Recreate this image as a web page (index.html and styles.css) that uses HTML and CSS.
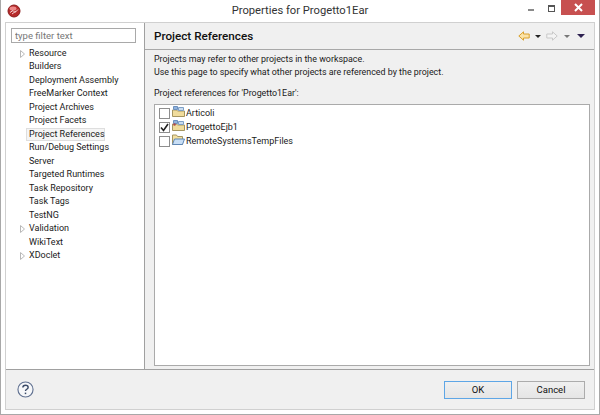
FILE: index.html
```html
<!DOCTYPE html>
<html lang="en">
<head>
    <meta charset="UTF-8">
    <title>Properties for Progetto1Ear</title>
    <link rel="stylesheet" href="styles.css">
</head>
<body>
    <div class="window">
        <div class="titlebar">
            <div class="title-left">
                <svg width="14" height="14" viewBox="0 0 14 14">
                    <circle cx="7" cy="7" r="6" fill="#b52a2a" stroke="#8c1c1c"/>
                    <ellipse cx="6" cy="4.500" rx="3.500" ry="2" fill="#e88"/>
                    <path d="M3 8.500l3-2 2 2 3-3M5 10l4-3" fill="none" stroke="#f6d0d0" stroke-width="1"/>
                </svg>
            </div>
            <div class="title-text">Properties for Progetto1Ear</div>
            <div class="win-controls">
                <span class="win-min"></span>
                <span class="win-max"></span>
                <span class="win-close">
                    <svg width="9" height="9" viewBox="0 0 9 9">
                        <path d="M1 1l7 7M8 1l-7 7" stroke="#fff" stroke-width="2"/>
                    </svg>
                </span>
            </div>
        </div>
        <div class="frame">
            <div class="content">
                <div class="sidebar">
                    <input class="filter" type="text" placeholder="type filter text">
                    <ul class="tree">
                        <li><svg class="arrow" width="5" height="8" viewBox="0 0 5 8"><path d="M.5.5l4 3.500-4 3.500z" fill="#fff" stroke="#b8b8b8"/></svg>Resource</li>
                        <li>Builders</li>
                        <li>Deployment Assembly</li>
                        <li>FreeMarker Context</li>
                        <li>Project Archives</li>
                        <li>Project Facets</li>
                        <li class="selected">Project References</li>
                        <li>Run/Debug Settings</li>
                        <li>Server</li>
                        <li>Targeted Runtimes</li>
                        <li>Task Repository</li>
                        <li>Task Tags</li>
                        <li>TestNG</li>
                        <li><svg class="arrow" width="5" height="8" viewBox="0 0 5 8"><path d="M.5.5l4 3.500-4 3.500z" fill="#fff" stroke="#b8b8b8"/></svg>Validation</li>
                        <li>WikiText</li>
                        <li><svg class="arrow" width="5" height="8" viewBox="0 0 5 8"><path d="M.5.5l4 3.500-4 3.500z" fill="#fff" stroke="#b8b8b8"/></svg>XDoclet</li>
                    </ul>
                </div>
                <div class="main">
                    <div class="page-header">
                        <h2>Project References</h2>
                        <div class="nav-icons">
                            <svg width="12" height="10" viewBox="0 0 12 10"><path d="M.8 5L5.500.8V3h5.700v4H5.500v2.200z" fill="#fbe3a8" stroke="#d9a02e"/></svg>
                            <span class="caret dark"></span>
                            <svg width="12" height="10" viewBox="0 0 12 10"><path d="M11.200 5L6.500.8V3H.8v4h5.700v2.200z" fill="#f4f4f4" stroke="#c8c8c8"/></svg>
                            <span class="caret grey"></span>
                            <span class="caret menu"></span>
                        </div>
                    </div>
                    <div class="page-body">
                        <p class="desc">Projects may refer to other projects in the workspace.<br>Use this page to specify what other projects are referenced by the project.</p>
                        <p class="list-label">Project references for 'Progetto1Ear':</p>
                        <div class="list">
                            <div class="row">
                                <span class="check"></span>
                                <svg class="proj-icon" width="13" height="11" viewBox="0 0 13 11"><path d="M.5 4h4l1 1h7v5.500H.5z" fill="#f0dc9c" stroke="#a59560"/><path d="M1.500.5h4v3h-4z" fill="#8fb2de" stroke="#6d90bc"/><path d="M6.500 1.500h5v3h-5z" fill="#c9dcf0" stroke="#7d9fc6"/></svg>
                                <span>Articoli</span>
                            </div>
                            <div class="row">
                                <span class="check"><svg width="9" height="9" viewBox="0 0 9 9"><path d="M1 4.500l2.500 3L8 1" fill="none" stroke="#222" stroke-width="1.600"/></svg></span>
                                <svg class="proj-icon" width="13" height="11" viewBox="0 0 13 11"><path d="M.5 4h4l1 1h7v5.500H.5z" fill="#f0dc9c" stroke="#a59560"/><path d="M1.500.5h4v3h-4z" fill="#8fb2de" stroke="#6d90bc"/><path d="M6.500 1.500h5v3h-5z" fill="#c9dcf0" stroke="#7d9fc6"/><circle cx="2.500" cy="4.500" r="1.300" fill="#b04a4a"/></svg>
                                <span>ProgettoEjb1</span>
                            </div>
                            <div class="row">
                                <span class="check"></span>
                                <svg class="proj-icon" width="13" height="11" viewBox="0 0 13 11"><path d="M.5 1h4l1 1.500h5v8H.5z" fill="#f2dfa0" stroke="#a59560"/><path d="M2.500 5h10l-2 5.500h-10z" fill="#c8def5" stroke="#5f86b4"/></svg>
                                <span>RemoteSystemsTempFiles</span>
                            </div>
                        </div>
                    </div>
                </div>
            </div>
            <div class="footer">
                <svg class="help" width="17" height="17" viewBox="0 0 18 18">
                    <circle cx="9" cy="9" r="8" fill="#f6f7f9" stroke="#5f7090" stroke-width="1.200"/>
                    <path d="M6.200 7c0-1.600 1.100-2.500 2.800-2.500s2.800.9 2.800 2.300c0 2-2.800 1.900-2.800 3.800" fill="none" stroke="#3a4a68" stroke-width="1.500"/>
                    <rect x="8.200" y="12.300" width="1.600" height="1.600" fill="#3a4a68"/>
                </svg>
                <div class="buttons">
                    <button class="btn btn-default">OK</button>
                    <button class="btn">Cancel</button>
                </div>
            </div>
        </div>
    </div>
</body>
</html>
```

FILE: styles.css
```css
html, body {
    margin: 0;
    height: 100%;
}
body {
    font-family: Roboto, "Liberation Sans", sans-serif;
    font-size: 9px;
    color: #1a1a1a;
}
.window {
    box-sizing: border-box;
    width: 600px;
    height: 415px;
    background-color: #fff;
    border: 1px solid #a8a8a8;
    border-top: none;
    display: flex;
    flex-direction: column;
}
.titlebar {
    height: 22px;
    display: grid;
    grid-template-columns: 1fr auto 1fr;
    flex-shrink: 0;
}
.title-left {
    padding: 4px 0 0 6px;
}
.title-text {
    font-size: 11.200px;
    color: #333;
    padding-top: 4px;
}
.win-controls {
    display: flex;
    justify-content: flex-end;
    align-items: flex-start;
    padding-right: 4px;
}
.win-min {
    width: 6px;
    height: 2px;
    background-color: #8a8a8a;
    margin: 9px 14px 0 0;
}
.win-max {
    box-sizing: border-box;
    width: 7px;
    height: 7px;
    border: 1px solid #555;
    border-top-width: 2px;
    margin: 5px 6px 0 0;
}
.win-close {
    width: 34px;
    height: 15px;
    background-color: #c75050;
    display: flex;
    align-items: center;
    justify-content: center;
}
.frame {
    flex: 1;
    margin: 0 4px 4px 4px;
    border: 1px solid #d0d0d0;
    display: flex;
    flex-direction: column;
    min-height: 0;
}
.content {
    flex: 1;
    display: flex;
    min-height: 0;
    border-bottom: 1px solid #a0a0a0;
}
.sidebar {
    width: 138px;
    flex-shrink: 0;
    background-color: #fff;
    border-right: 1px solid #a0a0a0;
    padding-top: 5px;
}
.filter {
    display: block;
    box-sizing: border-box;
    width: 125px;
    height: 15px;
    margin-left: 5px;
    padding: 0 3px;
    border: 1px solid #a9a9a9;
    font-family: inherit;
    font-size: 9.500px;
    outline: none;
}
.filter::placeholder {
    color: #777;
}
.tree {
    list-style: none;
    margin: 4px 0 0;
    padding: 0;
}
.tree li {
    position: relative;
    height: 13.470px;
    line-height: 13px;
    padding-left: 23px;
    white-space: nowrap;
}
.tree .arrow {
    position: absolute;
    left: 14px;
    top: 3px;
}
.tree .selected {
    background-color: #f5f5f5;
    box-shadow: inset 0 0 0 1px #dedede;
    margin-left: 20px;
    padding-left: 3px;
    width: 76px;
}
.main {
    flex: 1;
    background-color: #f0f0f0;
    display: flex;
    flex-direction: column;
    min-width: 0;
}
.page-header {
    height: 26px;
    border-bottom: 1px solid #a8a8a8;
    display: flex;
    align-items: center;
    justify-content: space-between;
    padding: 0 9px 0 9px;
    flex-shrink: 0;
}
h2 {
    margin: 0;
    font-size: 11.700px;
    font-weight: 500;
    color: #111;
}
.nav-icons {
    display: flex;
    align-items: center;
    gap: 5px;
}
.caret {
    width: 0;
    height: 0;
    border-left: 3px solid transparent;
    border-right: 3px solid transparent;
    border-top: 3px solid #222;
}
.caret.grey {
    border-top-color: #777;
    margin-left: 1px;
}
.caret.menu {
    border-left-width: 4px;
    border-right-width: 4px;
    border-top: 4px solid #2d2050;
    margin-left: 2px;
}
.page-body {
    flex: 1;
    display: flex;
    flex-direction: column;
    padding: 3px 4px 3px 9px;
    min-height: 0;
}
.desc {
    margin: 0;
    line-height: 13px;
    font-size: 8.900px;
}
.list-label {
    margin: 8px 0 4px;
    line-height: 13px;
    font-size: 8.900px;
}
.list {
    flex: 1;
    background-color: #fff;
    border: 1px solid #aaa;
    padding-top: 1px;
}
.row {
    display: flex;
    align-items: center;
    height: 14px;
    padding-left: 4px;
}
.check {
    box-sizing: border-box;
    width: 11px;
    height: 11px;
    border: 1px solid #8e8e8e;
    background-color: #fff;
    display: flex;
    align-items: center;
    justify-content: center;
    margin-right: 2px;
}
.proj-icon {
    margin: -4px 1px 0 0;
}
.footer {
    height: 39px;
    flex-shrink: 0;
    background-color: #f0f0f0;
    display: flex;
    align-items: center;
    justify-content: space-between;
    padding: 0 9px 0 11px;
}
.buttons {
    display: flex;
    gap: 5px;
}
.btn {
    width: 68px;
    height: 18px;
    padding: 0;
    border: 1px solid #acacac;
    background: linear-gradient(#f0f0f0, #e5e5e5);
    font-family: inherit;
    font-size: 9.500px;
    color: #111;
}
.btn-default {
    border-color: #5ea6e6;
}
```
